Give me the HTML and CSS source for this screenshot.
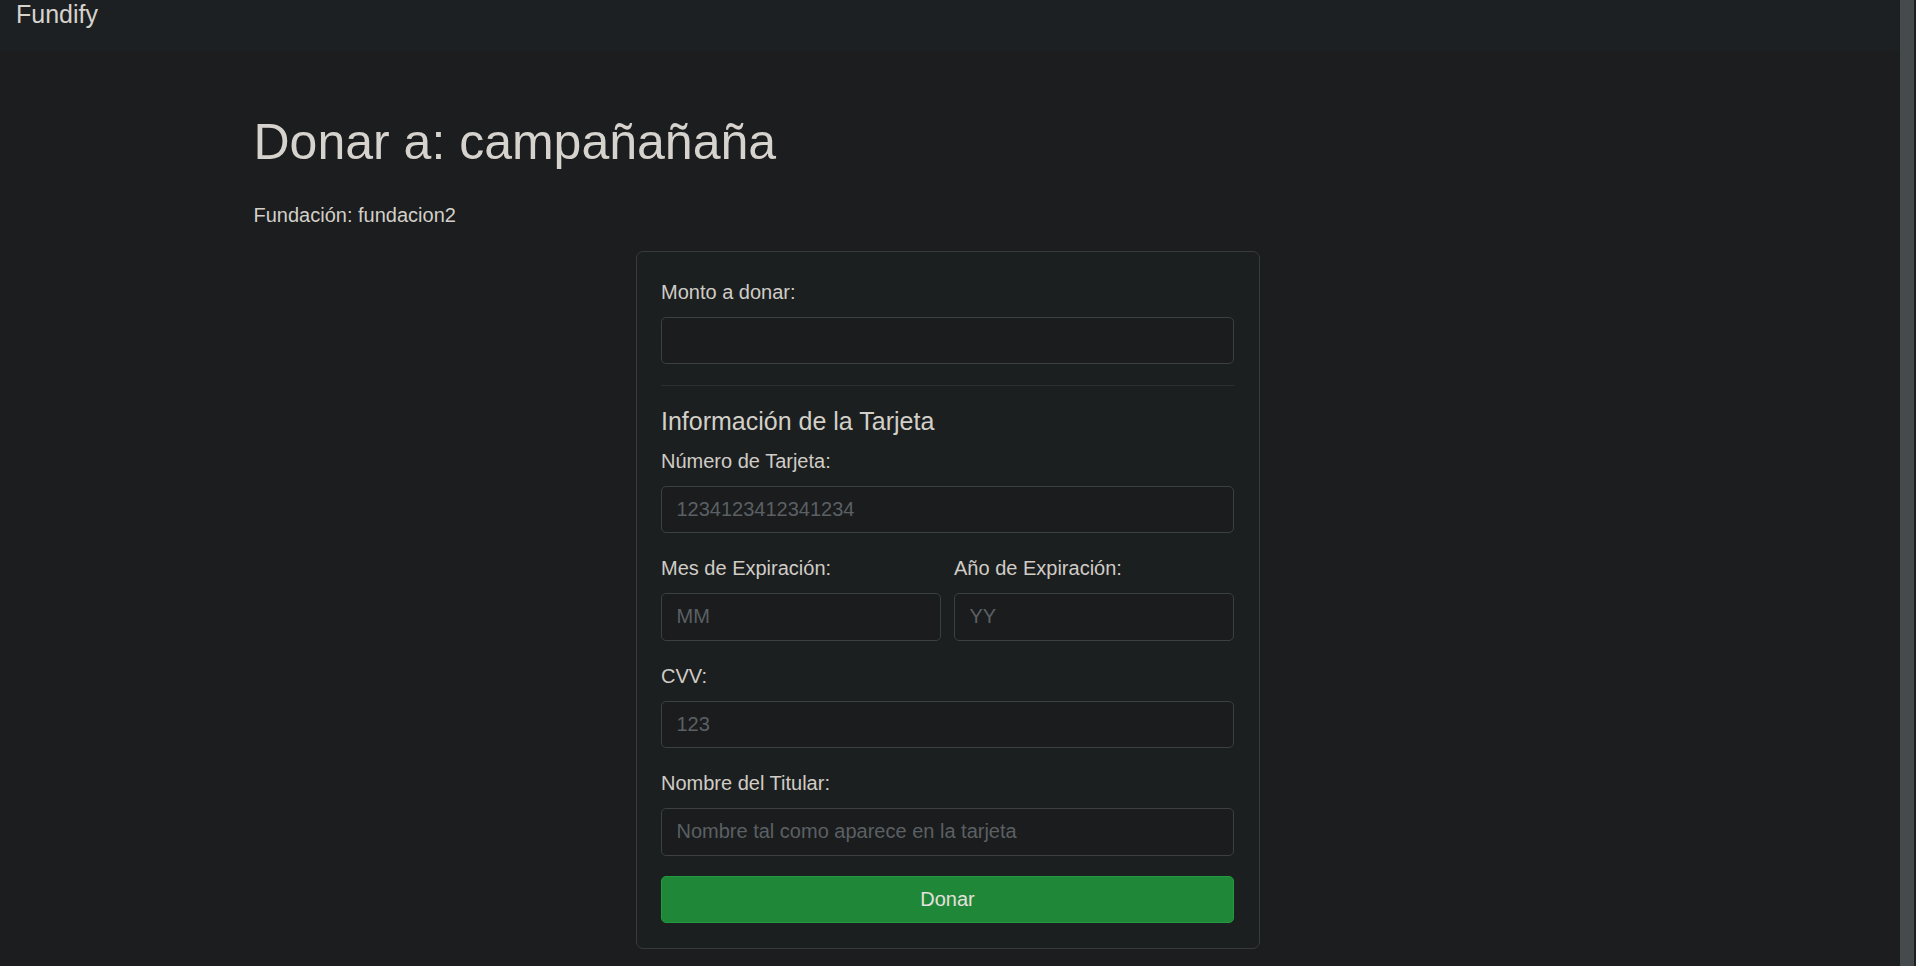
FILE: index.html
```html
<!DOCTYPE html>
<html lang="es">
<head>
<meta charset="utf-8">
<title>Donar - Fundify</title>
<link rel="stylesheet" href="styles.css">
</head>
<body>
<div class="page">
  <nav class="navbar">
    <a class="brand" href="#">Fundify</a>
  </nav>
  <main class="container">
    <h1 class="title">Donar a: campañañaña</h1>
    <p class="foundation">Fundación: fundacion2</p>
    <div class="card">
      <form class="form">
        <div class="group">
          <label class="label" for="monto">Monto a donar:</label>
          <input class="input" id="monto" type="text">
        </div>
        <hr class="divider">
        <h5 class="subtitle">Información de la Tarjeta</h5>
        <div class="group">
          <label class="label" for="num">Número de Tarjeta:</label>
          <input class="input" id="num" type="text" placeholder="1234123412341234">
        </div>
        <div class="group row">
          <div class="col">
            <label class="label" for="mes">Mes de Expiración:</label>
            <input class="input" id="mes" type="text" placeholder="MM">
          </div>
          <div class="col">
            <label class="label" for="anio">Año de Expiración:</label>
            <input class="input" id="anio" type="text" placeholder="YY">
          </div>
        </div>
        <div class="group">
          <label class="label" for="cvv">CVV:</label>
          <input class="input" id="cvv" type="text" placeholder="123">
        </div>
        <div class="group">
          <label class="label" for="titular">Nombre del Titular:</label>
          <input class="input" id="titular" type="text" placeholder="Nombre tal como aparece en la tarjeta">
        </div>
        <button class="btn" type="button">Donar</button>
      </form>
    </div>
  </main>
</div>
<div class="scrollbar" aria-hidden="true"></div>
</body>
</html>
```
FILE: styles.css
```css
* {
  box-sizing: border-box;
}
html {
  background: #1b1d1e;
}
body {
  margin: 0;
  display: flex;
  height: 100vh;
  overflow: hidden;
  background: #1b1d1e;
  color: #d3cfc9;
  font-family: "Liberation Sans", Arial, sans-serif;
  font-size: 20px;
  line-height: 30px;
}
.page {
  flex: 1;
  min-width: 0;
}
.scrollbar {
  width: 16px;
  flex: none;
  height: 100%;
  background: #454a4d;
  border-right: 2px solid #1d2023;
}
.navbar {
  height: 51px;
  background: #1d2023;
  padding: 0 16px;
}
.brand {
  display: inline-block;
  font-size: 25px;
  line-height: 29px;
  color: #d6d2cc;
  text-decoration: none;
}
.container {
  padding: 61px 258.5px 20px 253.5px;
}
.title {
  margin: 0 0 28px;
  font-size: 50px;
  line-height: 60px;
  font-weight: 400;
  color: #d6d2cd;
}
.foundation {
  margin: 0 0 21px;
}
.card {
  width: 624px;
  margin: 0 auto;
  padding: 24.5px;
  background: #1c1f20;
  border: 1px solid #373b3e;
  border-radius: 7px;
}
.form {
  display: flex;
  flex-direction: column;
}
.group {
  margin-bottom: 20px;
}
.row {
  display: grid;
  grid-template-columns: 1fr 1fr;
  column-gap: 13px;
}
.label {
  display: block;
  margin-bottom: 10px;
  color: #d0ccc6;
}
.input {
  display: block;
  width: 100%;
  height: 47.5px;
  padding: 7.5px 14.5px;
  font-family: inherit;
  font-size: 20px;
  line-height: 30px;
  color: #d0ccc6;
  background: #1a1c1d;
  border: 1px solid #3b4043;
  border-radius: 5px;
  outline: none;
}
.input::placeholder {
  color: #5b6064;
}
.divider {
  margin: 0.5px 0 20px;
  border: 0;
  border-top: 1px solid #2b2f31;
  height: 0;
}
.subtitle {
  margin: 0 0 10px;
  font-size: 25px;
  line-height: 30px;
  font-weight: 400;
  color: #d3cfc9;
}
.btn {
  display: block;
  width: 100%;
  height: 47.5px;
  padding: 7.5px 15px;
  font-family: inherit;
  font-size: 20px;
  line-height: 30px;
  color: #e4e1dd;
  background: #1f8838;
  border: 1px solid #229a3f;
  border-radius: 5px;
  cursor: pointer;
}
```
